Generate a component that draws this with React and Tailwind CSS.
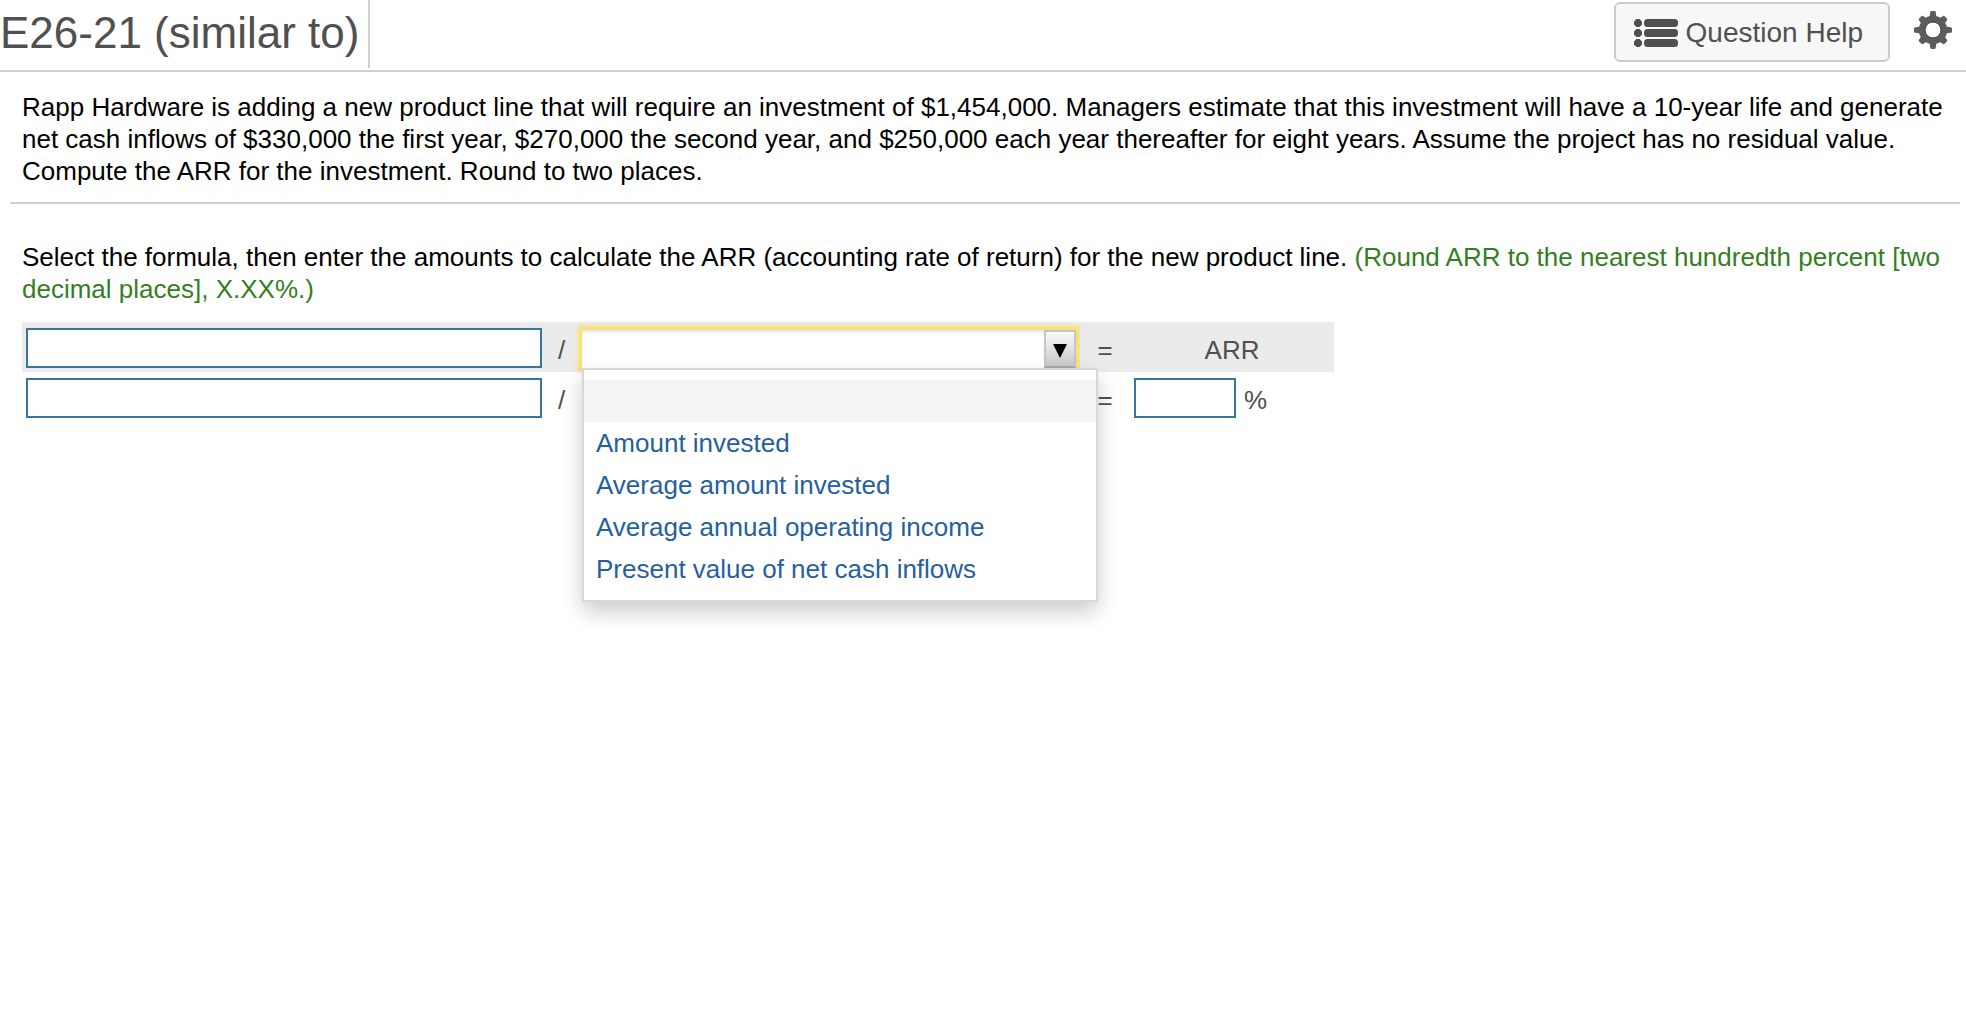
import { useState } from 'react';

const formulaOptions = [
  '',
  'Amount invested',
  'Average amount invested',
  'Average annual operating income',
  'Present value of net cash inflows'
];

const ListIcon = () => (
  <svg width="44" height="28" viewBox="0 0 44 28" fill="#505050" aria-hidden="true">
    {[0, 10, 20].map((y) => (
      <g key={y}>
        <path d={`M2.4 ${y}h3.2L8 ${y + 2.4}v3.2L5.6 ${y + 8}H2.4L0 ${y + 5.6}V${y + 2.4}z`} />
        <rect x="10" y={y} width="34" height="8" rx="3.5" />
      </g>
    ))}
  </svg>
);

const GearIcon = () => (
  <svg width="38" height="38" viewBox="-19 -19 38 38" aria-hidden="true">
    <g fill="#5c5c5c">
      {[0, 45, 90, 135, 180, 225, 270, 315].map((angle) => (
        <path
          key={angle}
          transform={`rotate(${angle})`}
          d={
            angle % 90 === 0
              ? 'M-3.6 -12L-2.8 -17.6Q-2.6 -19 -1.4 -19H1.4Q2.6 -19 2.8 -17.6L3.6 -12z'
              : 'M-3.8 -12L-3 -16.6Q-2.8 -18 -1.6 -18H1.6Q2.8 -18 3 -16.6L3.8 -12z'
          }
        />
      ))}
    </g>
    <circle r="11" fill="none" stroke="#5c5c5c" strokeWidth="6.4" />
    <circle r="8" fill="none" stroke="#484848" strokeWidth="1" />
  </svg>
);

const AmountInput = ({ label }) => (
  <input
    type="text"
    aria-label={label}
    className="block h-10 w-full border-2 border-[#35789a] bg-white px-2 outline-none"
  />
);

const FormulaSelect = () => {
  const [open, setOpen] = useState(true);
  const [value, setValue] = useState('');

  const choose = (option) => {
    setValue(option);
    setOpen(false);
  };

  return (
    <div className="relative">
      <div className="relative shadow-[0_0_4px_4px_#f8df70]">
        <select
          aria-label="Formula denominator"
          value={value}
          onChange={(e) => choose(e.target.value)}
          onMouseDown={(e) => {
            e.preventDefault();
            setOpen(!open);
          }}
          className="block h-[38px] w-full appearance-none bg-white pl-3 text-[#255fa0] shadow-[inset_0_3px_3px_-1px_#e4e4e4] outline-none"
        >
          {formulaOptions.map((option) => (
            <option key={option} value={option}>{option}</option>
          ))}
        </select>
        <span className="pointer-events-none absolute inset-y-0 right-0 flex w-8 items-center justify-center border-2 border-[#c6c6c6] border-b-[#a8a8a8] bg-linear-to-b from-[#fafafa] to-[#c8c8c8] pt-1">
          <svg width="14" height="14" viewBox="0 0 14 14" aria-hidden="true">
            <path d="M0 0h14L7 14z" fill="#000" />
          </svg>
        </span>
      </div>
      {open && (
        <ul className="absolute top-full left-0 z-10 w-[516px] border-2 border-[#d8d8d8] bg-white py-[10px] shadow-[0_10px_20px_rgba(0,0,0,0.2)]">
          {formulaOptions.map((option) => (
            <li key={option}>
              <button
                type="button"
                aria-label={option || 'No selection'}
                onClick={() => choose(option)}
                className={`block h-[42px] w-full px-3 text-left text-[#255fa0] ${
                  option === value ? 'bg-[#f4f4f4]' : 'bg-white'
                }`}
              >
                {option}
              </button>
            </li>
          ))}
        </ul>
      )}
    </div>
  );
};

const Header = () => (
  <header className="flex items-start justify-between border-b-2 border-[#cdd0dd]">
    <h1 className="mb-[2px] h-[68px] border-r-2 border-[#cdd0dd] pr-[9px] text-[44px] leading-[66px] text-[#505050]">
      E26-21 (similar to)
    </h1>
    <div className="flex items-start gap-6 pt-[2px] pr-[14px]">
      <button
        type="button"
        className="flex h-[60px] items-center gap-2 rounded-md border-2 border-[#cccccc] bg-[#f7f7f7] pt-[2px] pr-[25px] pl-[18px] text-[28px] leading-8 text-[#505050]"
      >
        <ListIcon />
        Question Help
      </button>
      <button type="button" aria-label="Settings" className="pt-[9px]">
        <GearIcon />
      </button>
    </div>
  </header>
);

const App = () => (
  <div className="min-h-screen bg-white font-['Liberation_Sans',Arial,sans-serif] text-[26px] leading-8 text-black">
    <Header />
    <main className="pr-[6px] pl-[10px]">
      <p className="border-b-2 border-[#cdd0dd] px-3 pt-[19px] pb-[15px]">
        Rapp Hardware is adding a new product line that will require an investment of $1,454,000. Managers
        estimate that this investment will have a 10-year life and generate net cash inflows of $330,000 the
        first year, $270,000 the second year, and $250,000 each year thereafter for eight years. Assume the
        project has no residual value. Compute the ARR for the investment. Round to two places.
      </p>
      <div className="px-3 pt-[37px]">
        <p>
          Select the formula, then enter the amounts to calculate the ARR (accounting rate of return) for the
          new product line.{' '}
          <span className="text-[#357e1f]">
            (Round ARR to the nearest hundredth percent [two decimal places], X.XX%.)
          </span>
        </p>
        <table className="mt-[17px] border-collapse text-[#505050]">
          <tbody>
            <tr className="h-[50px] bg-[#ebebeb] align-top">
              <td className="px-1 pt-[6px]">
                <div className="w-[516px]">
                  <AmountInput label="Formula numerator" />
                </div>
              </td>
              <td className="w-9 pt-3 pl-3">/</td>
              <td className="pt-2 pr-1">
                <div className="w-[494px]">
                  <FormulaSelect />
                </div>
              </td>
              <td className="relative w-[50px] bg-[#ebebeb] pt-3 text-center">=</td>
              <td className="w-[204px] pt-3 text-center">ARR</td>
            </tr>
            <tr className="h-[50px] align-top">
              <td className="px-1 pt-[6px]">
                <AmountInput label="Numerator amount" />
              </td>
              <td className="pt-3 pl-3">/</td>
              <td className="px-1 pt-[6px]">
                <AmountInput label="Denominator amount" />
              </td>
              <td className="pt-3 text-center">=</td>
              <td className="px-1 pt-[6px]">
                <label className="flex gap-2">
                  <span className="w-[102px]">
                    <AmountInput label="ARR percent" />
                  </span>
                  <span className="pt-[6px]">%</span>
                </label>
              </td>
            </tr>
          </tbody>
        </table>
      </div>
    </main>
  </div>
);

export default App;
